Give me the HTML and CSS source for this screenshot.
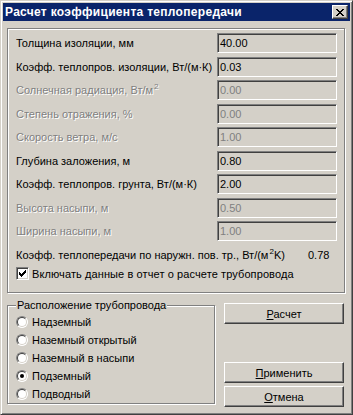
FILE: index.html
```html
<!DOCTYPE html>
<html>
<head>
  <meta charset="UTF-8" />
  <title>Расчет коэффициента теплопередачи</title>
  <link rel="stylesheet" href="styles.css">
</head>
<body>

<div class="window">
  <div class="titlebar">
    <span class="title">Расчет коэффициента теплопередачи</span>
    <span class="close">
      <svg width="8" height="7" viewBox="0 0 8 7" shape-rendering="crispEdges">
        <path d="M0 0h2v1h-2zM6 0h2v1h-2zM1 1h2v1h-2zM5 1h2v1h-2zM2 2h4v1h-4zM3 3h2v1h-2zM2 4h4v1h-4zM1 5h2v1h-2zM5 5h2v1h-2zM0 6h2v1h-2zM6 6h2v1h-2z" fill="#000"/>
      </svg>
    </span>
  </div>

  <div class="panel">
    <div class="row"><span class="label">Толщина изоляции, мм</span><span class="edit">40.00</span></div>
    <div class="row"><span class="label">Коэфф. теплопров. изоляции, Вт/(м·К)</span><span class="edit">0.03</span></div>
    <div class="row off"><span class="label">Солнечная радиация, Вт/м<sup>2</sup></span><span class="edit">0.00</span></div>
    <div class="row off"><span class="label">Степень отражения, %</span><span class="edit">0.00</span></div>
    <div class="row off"><span class="label">Скорость ветра, м/с</span><span class="edit">1.00</span></div>
    <div class="row"><span class="label">Глубина заложения, м</span><span class="edit">0.80</span></div>
    <div class="row"><span class="label">Коэфф. теплопров. грунта, Вт/(м·К)</span><span class="edit">2.00</span></div>
    <div class="row off"><span class="label">Высота насыпи, м</span><span class="edit">0.50</span></div>
    <div class="row off"><span class="label">Ширина насыпи, м</span><span class="edit">1.00</span></div>
    <div class="row result"><span class="label">Коэфф. теплопередачи по наружн. пов. тр., Вт/(м<sup>2</sup>K)</span><span class="value">0.78</span></div>
    <div class="check">
      <span class="checkbox">
        <svg width="7" height="7" viewBox="0 0 7 7" shape-rendering="crispEdges">
          <path d="M6 0h1v3h-1zM5 1h1v3h-1zM4 2h1v3h-1zM3 3h1v3h-1zM2 4h1v3h-1zM1 3h1v3h-1zM0 2h1v3h-1z" fill="#000"/>
        </svg>
      </span>
      <span>Включать данные в отчет о расчете трубопровода</span>
    </div>
  </div>

  <div class="bottom">
    <div class="group">
      <span class="legend">Расположение трубопровода</span>
      <div class="radio"><span class="circle"></span>Надземный</div>
      <div class="radio"><span class="circle"></span>Наземный открытый</div>
      <div class="radio"><span class="circle"></span>Наземный в насыпи</div>
      <div class="radio"><span class="circle checked"></span>Подземный</div>
      <div class="radio"><span class="circle"></span>Подводный</div>
    </div>
    <div class="buttons">
      <button class="btn"><u>Р</u>асчет</button>
      <button class="btn apply"><u>П</u>рименить</button>
      <button class="btn cancel"><u>О</u>тмена</button>
    </div>
  </div>
</div>

</body>
</html>
```

FILE: styles.css
```css
body {
  margin: 0;
  font-family: "Liberation Sans", Arial, sans-serif;
  font-size: 11px;
  color: #000;
}

.window {
  width: 353px;
  height: 415px;
  box-sizing: border-box;
  background: #d4d0c8;
  border: 1px solid;
  border-color: #d4d0c8 #404040 #404040 #d4d0c8;
  box-shadow: inset 1px 1px #fff, inset -1px -1px #808080;
  padding: 2px;
}

.titlebar {
  height: 18px;
  background: #0a246a;
  display: flex;
  align-items: center;
  justify-content: space-between;
  padding: 0 2px 0 2px;
}

.title {
  color: #fff;
  font-weight: bold;
  font-size: 12px;
  letter-spacing: 0.3px;
}

.close {
  width: 16px;
  height: 14px;
  box-sizing: border-box;
  background: #d4d0c8;
  border: 1px solid;
  border-color: #fff #404040 #404040 #fff;
  box-shadow: inset -1px -1px #808080;
  display: flex;
  align-items: center;
  justify-content: center;
}

.panel {
  margin: 7px 5px 0 4px;
  height: 265px;
  box-sizing: border-box;
  border: 1px solid #808080;
  box-shadow: inset 1px 1px #fff, 1px 1px #fff;
  padding: 4px 7px 0 8px;
}

.row {
  height: 20px;
  display: flex;
  align-items: center;
  justify-content: space-between;
  margin-bottom: 4px;
}

.row:nth-child(even) {
  margin-bottom: 3px;
}

.row sup {
  font-size: 8px;
  line-height: 0;
  vertical-align: 5px;
  margin-left: 1px;
}

.edit {
  width: 120px;
  height: 20px;
  box-sizing: border-box;
  border: 1px solid;
  border-color: #808080 #fff #fff #808080;
  box-shadow: inset 1px 1px #404040, inset -1px -1px #d4d0c8;
  padding: 0 0 0 2px;
  display: flex;
  align-items: center;
}

.off .label {
  color: #808080;
  text-shadow: 1px 1px #fff;
}

.off .edit {
  color: #808080;
}

.result .value {
  width: 29px;
}

.check {
  display: flex;
  align-items: center;
  gap: 3px;
  margin-top: -1px;
}

.check span + span {
  letter-spacing: 0.1px;
}

.checkbox,
.circle {
  box-sizing: border-box;
  border: 1px solid;
  border-color: #808080 #fff #fff #808080;
  box-shadow: inset 1px 1px #404040, inset -1px -1px #d4d0c8;
  background: #fff;
  display: flex;
  align-items: center;
  justify-content: center;
}

.checkbox {
  width: 13px;
  height: 13px;
}

.bottom {
  display: flex;
  align-items: flex-start;
  margin: 10px 5px 0 4px;
}

.group {
  position: relative;
  width: 208px;
  height: 99px;
  margin-top: 2px;
  box-sizing: border-box;
  border: 1px solid #808080;
  box-shadow: inset 1px 1px #fff, 1px 1px #fff;
  padding: 7px 0 0 8px;
}

.legend {
  position: absolute;
  top: -7px;
  left: 8px;
  line-height: 13px;
  padding: 0 1px;
  background: #d4d0c8;
}

.radio {
  height: 18px;
  display: flex;
  align-items: center;
  gap: 4px;
}

.circle {
  width: 12px;
  height: 12px;
  border-radius: 50%;
  box-shadow: none;
  position: relative;
}

.circle::before {
  content: "";
  position: absolute;
  border-radius: 50%;
  border: 1px solid;
  border-color: #404040 #d4d0c8 #d4d0c8 #404040;
  box-sizing: border-box;
  width: 10px;
  height: 10px;
  left: 0;
  top: 0;
}

.circle.checked::after {
  content: "";
  width: 4px;
  height: 4px;
  border-radius: 50%;
  background: #000;
}

.buttons {
  display: flex;
  flex-direction: column;
  margin-left: 9px;
}

.btn {
  width: 120px;
  height: 21px;
  box-sizing: border-box;
  background: #d4d0c8;
  border: 1px solid;
  border-color: #fff #404040 #404040 #fff;
  box-shadow: inset -1px -1px #808080;
  font-family: "Liberation Sans", Arial, sans-serif;
  font-size: 11px;
  color: #000;
  padding: 0;
}

.apply {
  margin-top: 38px;
}

.cancel {
  margin-top: 3px;
}
```
